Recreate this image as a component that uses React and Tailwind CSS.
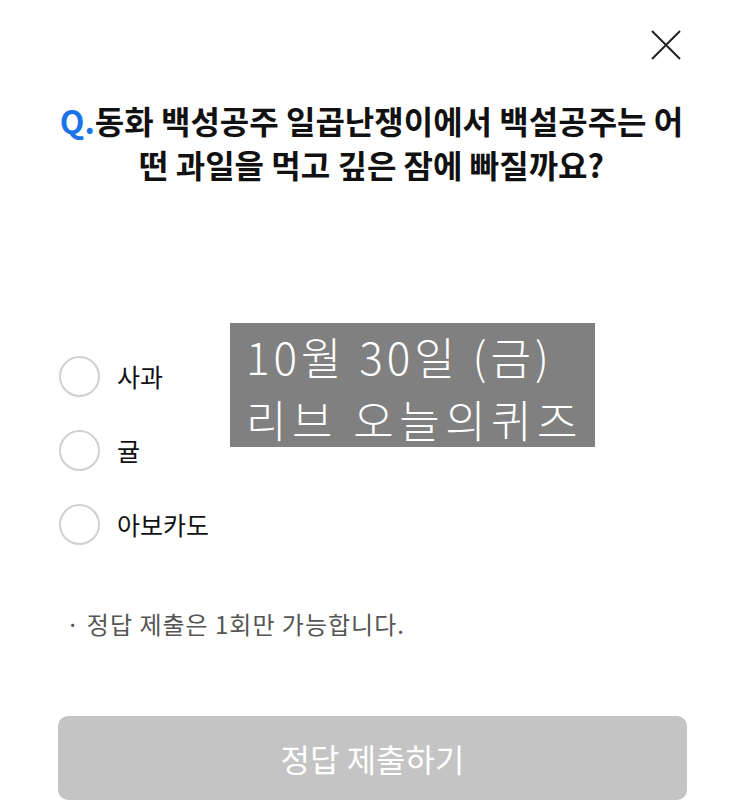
import React from "react";

const font = { fontFamily: '"Noto Sans CJK KR", "Noto Sans", sans-serif' };

function Radio({ label }) {
  return (
    <div className="flex items-center h-[74px]">
      <div className="w-[41px] h-[41px] rounded-full border-2 border-[#d0d0d0] bg-white shrink-0" />
      <span className="ml-[17px] text-[25px] text-[#111] leading-none">{label}</span>
    </div>
  );
}

export default function App() {
  return (
    <div className="relative w-[743px] h-[802px] bg-white overflow-hidden" style={font}>
      <div className="flex justify-end pt-[30px] pr-[62px]">
        <svg width="30" height="30" viewBox="0 0 30 30">
          <path d="M1 1 L29 29 M29 1 L1 29" stroke="#222" strokeWidth="2" fill="none" />
        </svg>
      </div>
      <h1 className="mt-[38px] px-[30px] text-center text-[32px] font-bold leading-[44px] text-[#111]">
        <span className="text-[#1a73e8]">Q.</span>동화 백성공주 일곱난쟁이에서 백설공주는 어
        <br />
        떤 과일을 먹고 깊은 잠에 빠질까요?
      </h1>
      <div className="mt-[153px] pl-[59px] flex flex-col">
        <Radio label="사과" />
        <Radio label="귤" />
        <Radio label="아보카도" />
      </div>
      <p className="mt-[51px] pl-[66px] text-[24px] tracking-[1px] text-[#555] leading-none">· 정답 제출은 1회만 가능합니다.</p>
      <div className="mt-[80px] ml-[58px] mr-[56px] h-[84px] rounded-[10px] bg-[#c4c4c4] flex items-center justify-center">
        <span className="text-[32px] text-white">정답 제출하기</span>
      </div>
      <div className="absolute left-[230px] top-[323px] w-[365px] h-[124px] bg-[#808080] pl-[16px] pt-[2px] text-white text-[44px] font-light leading-[63px] whitespace-nowrap">
        <div className="tracking-[4px]">10월 30일 (금)</div>
        <div className="tracking-[5.5px]">리브 오늘의퀴즈</div>
      </div>
    </div>
  );
}
